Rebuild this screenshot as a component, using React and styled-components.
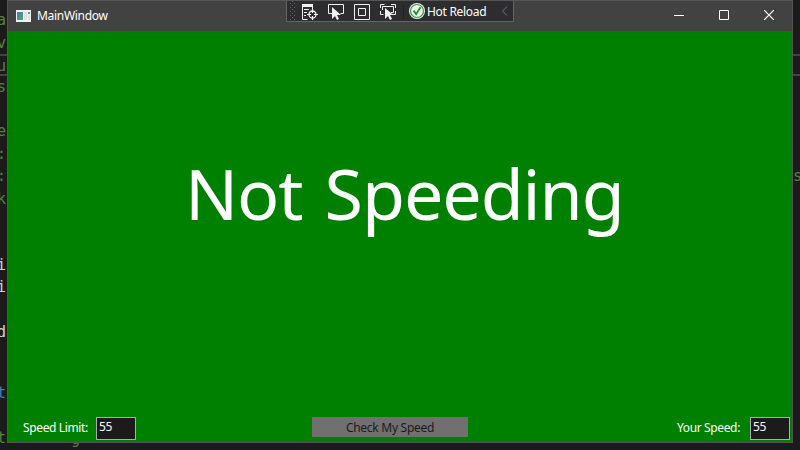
import React from "react";
import styled, { createGlobalStyle } from "styled-components";

const GlobalStyle = createGlobalStyle`
  * { box-sizing: border-box; }
  body { margin: 0; background: #1b1b1c; overflow: hidden; }
`;

const Desktop = styled.div`
  display: grid;
  grid-template-columns: 7px 786px 7px;
  grid-template-rows: 443px 7px;
  width: 800px;
  height: 450px;
  overflow: hidden;
  background: #1b1b1c;
  font-family: "Noto Sans", "Open Sans", sans-serif;
`;

const Gutter = styled.div`
  grid-row: 1 / 3;
  overflow: hidden;
  display: flex;
  flex-direction: column;
  align-items: ${(p) => (p.$side === "left" ? "flex-end" : "flex-start")};
  font-family: "DejaVu Sans Mono", monospace;
`;

const CodeLine = styled.div`
  flex: none;
  width: 100%;
  height: ${(p) => p.$height}px;
  display: flex;
  justify-content: ${(p) => (p.$right ? "flex-start" : "flex-end")};
  align-items: flex-end;
  padding-right: ${(p) => (p.$right ? 0 : 1)}px;
  font-size: 15.5px;
  line-height: 18px;
  color: ${(p) => p.$color || "#55803f"};
  white-space: pre;
`;

const CurrentLine = styled(CodeLine)`
  margin-top: ${(p) => (p.$right ? 0 : 2)}px;
  border-top: 2px solid #444446;
  border-bottom: 2px solid #444446;
  line-height: 16px;
`;

const Window = styled.main`
  display: flex;
  flex-direction: column;
  border: 1px solid #555555;
  background: #008000;
  min-width: 0;
`;

const TitleBar = styled.header`
  flex: none;
  height: 30px;
  display: grid;
  grid-template-columns: 278px 228px 1fr;
  background: #424242;
  color: #fff;
`;

const Caption = styled.div`
  display: flex;
  align-items: center;
  padding-left: 8px;
  gap: 6px;
  height: 29px;
`;

const Text = styled.span`
  display: inline-block;
  font-size: 12px;
  letter-spacing: ${(p) => p.$spacing || 0}px;
  line-height: 16px;
  white-space: nowrap;
`;

const DebugBar = styled.div`
  display: flex;
  align-items: center;
  height: 21px;
  background: #2d2d30;
  border: 1px solid #646466;
  border-top: 0;
`;

const ReloadText = styled(Text)`
  margin: 2px 0 0 1px;
`;

const Controls = styled.div`
  display: flex;
  justify-content: flex-end;
`;

const CaptionButton = styled.button`
  width: ${(p) => p.$width || 45}px;
  height: 28px;
  padding: 0;
  border: 0;
  background: none;
  display: grid;
  place-items: center;
`;

const Content = styled.section`
  flex: 1;
  display: flex;
  flex-direction: column;
  justify-content: space-between;
  color: #fff;
`;

const Status = styled.h1`
  margin: 114px 0 0 177px;
  font-size: 70px;
  font-weight: 400;
  line-height: 96px;
  letter-spacing: -1.1px;
  word-spacing: 5px;
  white-space: nowrap;
`;

const Footer = styled.footer`
  display: grid;
  grid-template-columns: 304px 156px 1fr;
  height: 25px;
`;

const Field = styled.label`
  display: flex;
  justify-content: ${(p) => (p.$end ? "flex-end" : "flex-start")};
  padding-left: 15px;
  padding-right: 2px;
  gap: ${(p) => (p.$end ? 10 : 8)}px;
  line-height: 20px;
`;

const FieldText = styled(Text)`
  margin-top: 3px;
`;

const Input = styled.input`
  width: 40px;
  height: 23px;
  padding: 0 2px 4px;
  border: 1px solid #abadb3;
  border-radius: 0;
  background: #1b1b1c;
  color: #fff;
  font: 12px "Noto Sans", sans-serif;
  letter-spacing: -0.4px;
  outline: 0;
`;

const CheckButton = styled.button`
  height: 20px;
  padding: 2px 0 0;
  border: 0;
  background: #707070;
  color: #1b1b1c;
  font-family: inherit;
  display: flex;
  align-items: center;
  justify-content: center;
`;

const BottomStrip = styled.div`
  grid-column: 2;
  grid-row: 2;
  overflow: hidden;
  display: flex;
  align-items: flex-end;
  height: 4px;
  padding-left: 64px;
  font: 15px/16px "DejaVu Sans Mono", monospace;
  color: #55803f;
`;

const AppIcon = () => (
  <svg width="15" height="12" viewBox="0 0 15 12">
    <defs>
      <linearGradient id="pane" x1="0" y1="0" x2="1" y2="1">
        <stop stopColor="#397da5" />
        <stop offset="1" stopColor="#58a878" />
      </linearGradient>
    </defs>
    <path fill="#f1f1f1" d="M0 0h15v12H0z" />
    <path fill="url(#pane)" d="M1 2h6v8H1z" />
    <path fill="#dfe1e4" d="M8 2h3v8H8z" />
    <path fill="#5d9d91" d="M12 2h2v2h-2z" />
    <path fill="#e0e0e0" d="M12 5h2v5h-2z" />
  </svg>
);

const DebugIcons = () => (
  <svg width="121" height="20" viewBox="287 0 121 20" fill="none">
    <g fill="#646468">
      {[2, 6, 10, 14, 18].map((y) => (
        <path key={y} d={`M290 ${y}h1v1h-1zM294 ${y}h1v1h-1zM292 ${y - 2}h1v1h-1z`} />
      ))}
    </g>
    <path fill="#f1f1f1" d="M302 3h11v3h-11z" />
    <path stroke="#f1f1f1" d="M302.5 5v13.500h5M312.500 5v3M304 8.500h5M304 11.500h3M304 14.500h2" />
    <circle cx="312.500" cy="13.500" r="3.500" stroke="#f1f1f1" strokeWidth="1.300" />
    <path stroke="#f1f1f1" strokeWidth="1.200" d="M312.500 8v4M312.500 15v4M307 13.500h4M314 13.500h4" />
    <path stroke="#f1f1f1" d="M333 12.500h-4.500v-9h15v9h-3" />
    <path fill="#f1f1f1" d="M332 6v12l3-3 2 4 2-1-2-4h4z" />
    <path stroke="#f1f1f1" d="M354.500 3.500h15v15h-15zM358.500 7.500h7v7h-7z" />
    <path stroke="#f1f1f1" d="M380.500 7V3.500h4M391 3.500h4.500V7M380.500 10v3.500h3M395.500 10v3.500H391M382.500 9V5.500h11v6H391" />
    <path fill="#f1f1f1" d="M385 7v11l3-3 2 4 2-1-2-4h3.500z" />
    <path stroke="#222225" d="M403.500 4v14" />
  </svg>
);

const ReloadIcon = () => (
  <svg width="18" height="18" viewBox="0 0 18 18" fill="none">
    <circle cx="9" cy="9" r="8" fill="#f1f1f1" />
    <circle cx="9" cy="9" r="6.500" stroke="#399a43" strokeWidth="1.200" />
    <path stroke="#2d9138" strokeWidth="1.900" d="m5.500 8.700 2.700 3.500 4.300-7" />
  </svg>
);

const Chevron = styled.svg`
  margin-left: auto;
  margin-right: 5px;
`;

const leftLines = [
  ["a", 29], ["v", 23],
];
const leftRest = [
  ["s", 20], ["e", 44], [":", 23], [":", 22], ["k", 23],
  ["i", 66, "#d0d0d0"], ["i", 22, "#d0d0d0"], ["d", 45, "#d0d0d0"],
  ["t", 61, "#4480ad"], ["t", 45],
];

export default function App() {
  return (
    <Desktop>
      <GlobalStyle />
      <Gutter $side="left">
        {leftLines.map(([text, height], i) => <CodeLine key={i} $height={height}>{text}</CodeLine>)}
        <CurrentLine $height={22}>u</CurrentLine>
        {leftRest.map(([text, height, color], i) => (
          <CodeLine key={i} $height={height} $color={color}>{text}</CodeLine>
        ))}
      </Gutter>
      <Window>
        <TitleBar>
          <Caption><AppIcon /><Text $spacing={-0.3}>MainWindow</Text></Caption>
          <DebugBar>
            <DebugIcons />
            <ReloadIcon />
            <ReloadText $spacing={-0.3}>Hot Reload</ReloadText>
            <Chevron width="7" height="10" fill="none" stroke="#727276"><path d="M6 .5 1.500 5 6 9.500" /></Chevron>
          </DebugBar>
          <Controls>
            <CaptionButton aria-label="Minimize">
              <svg width="10" height="10" stroke="#fff"><path d="M0 5.500h10" /></svg>
            </CaptionButton>
            <CaptionButton aria-label="Maximize">
              <svg width="10" height="10" fill="none" stroke="#fff"><path d="M.5.5h9v9h-9z" /></svg>
            </CaptionButton>
            <CaptionButton $width={46} aria-label="Close">
              <svg width="10" height="10" stroke="#fff" strokeWidth="1.200"><path d="m0 0 10 10M10 0 0 10" /></svg>
            </CaptionButton>
          </Controls>
        </TitleBar>
        <Content>
          <Status>Not Speeding</Status>
          <Footer>
            <Field><FieldText $spacing={-0.36}>Speed Limit:</FieldText><Input defaultValue="55" /></Field>
            <CheckButton><Text $spacing={-0.28}>Check My Speed</Text></CheckButton>
            <Field $end><FieldText $spacing={-0.36}>Your Speed:</FieldText><Input defaultValue="55" /></Field>
          </Footer>
        </Content>
      </Window>
      <Gutter $side="right">
        <CodeLine $right $height={54} />
        <CurrentLine $right $height={22} />
        <CodeLine $right $height={109}>s</CodeLine>
      </Gutter>
      <BottomStrip>g</BottomStrip>
    </Desktop>
  );
}
